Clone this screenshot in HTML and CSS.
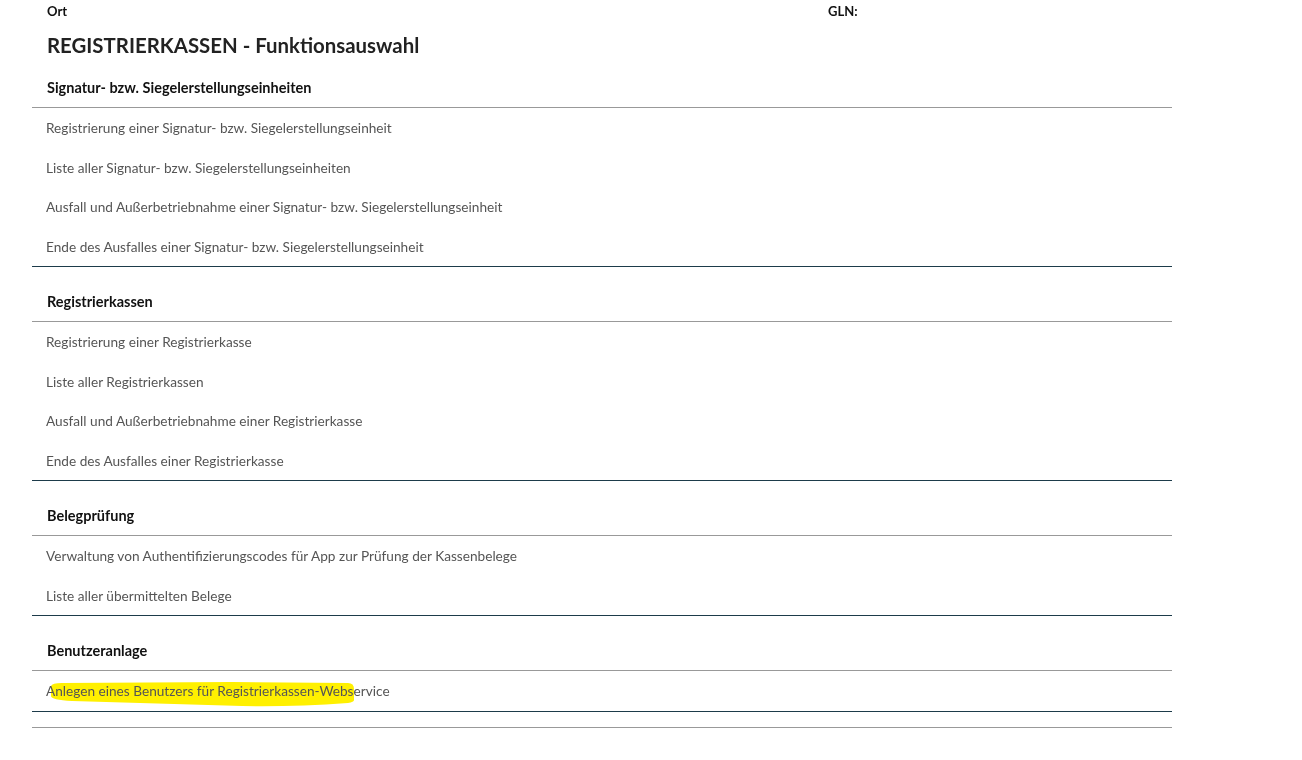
FILE: index.html
```html
<!DOCTYPE html>
<html lang="de">
<head>
    <meta charset="UTF-8">
    <meta name="viewport" content="width=device-width, initial-scale=1.0">
    <title>Registrierkassen - Funktionsauswahl</title>
    <link rel="stylesheet" href="styles.css">
</head>
<body>
    <div class="page">
        <div class="meta">
            <span class="meta-ort">Ort</span>
            <span class="meta-gln">GLN:</span>
        </div>
        <h1>REGISTRIERKASSEN - Funktionsauswahl</h1>

        <section class="group">
            <h2>Signatur- bzw. Siegelerstellungseinheiten</h2>
            <ul class="links">
                <li><a href="#">Registrierung einer Signatur- bzw. Siegelerstellungseinheit</a></li>
                <li><a href="#">Liste aller Signatur- bzw. Siegelerstellungseinheiten</a></li>
                <li><a href="#">Ausfall und Außerbetriebnahme einer Signatur- bzw. Siegelerstellungseinheit</a></li>
                <li><a href="#">Ende des Ausfalles einer Signatur- bzw. Siegelerstellungseinheit</a></li>
            </ul>
        </section>

        <section class="group">
            <h2>Registrierkassen</h2>
            <ul class="links">
                <li><a href="#">Registrierung einer Registrierkasse</a></li>
                <li><a href="#">Liste aller Registrierkassen</a></li>
                <li><a href="#">Ausfall und Außerbetriebnahme einer Registrierkasse</a></li>
                <li><a href="#">Ende des Ausfalles einer Registrierkasse</a></li>
            </ul>
        </section>

        <section class="group">
            <h2>Belegprüfung</h2>
            <ul class="links">
                <li><a href="#">Verwaltung von Authentifizierungscodes für App zur Prüfung der Kassenbelege</a></li>
                <li><a href="#">Liste aller übermittelten Belege</a></li>
            </ul>
        </section>

        <section class="group">
            <h2>Benutzeranlage</h2>
            <ul class="links">
                <li class="marked">
                    <!-- Textmarker-Strich -->
                    <svg class="marker" width="340" height="40" viewBox="0 0 340 40">
                        <path d="M19 15 Q20 12 30 12 L200 11 L316 12 Q322 12 322 18 L322 29 Q322 31 316 32 Q260 36 210 35 L40 30 Q19 29 19 25 Z" fill="#fff000"/>
                    </svg>
                    <a href="#">Anlegen eines Benutzers für Registrierkassen-Webservice</a>
                </li>
            </ul>
        </section>

        <div class="end-rule"></div>
    </div>
</body>
</html>
```

FILE: styles.css
```css
body {
    margin: 0;
    background-color: #fff;
    font-family: Lato, "Open Sans", sans-serif;
}
.page {
    width: 1140px;
    margin-left: 32px;
}
.meta {
    display: flex;
    height: 22px;
    line-height: 22px;
    font-size: 13px;
    font-weight: bold;
    color: #111;
}
.meta-ort {
    margin-left: 15px;
    width: 781px;
}
h1 {
    margin: 9px 0 0 15px;
    height: 28px;
    line-height: 28px;
    font-size: 20.4px;
    font-weight: bold;
    color: #222;
}
.group + .group {
    margin-top: 6px;
}
h2 {
    margin: 0;
    padding: 19px 15px 9px;
    line-height: 20px;
    font-size: 14.5px;
    font-weight: bold;
    color: #111;
    border-bottom: 1px solid #999;
}
.links {
    list-style: none;
    margin: 0;
    padding: 0;
    border-bottom: 1px solid #1d3b4a;
}
.links li {
    position: relative;
    height: 38.5px;
    padding: 1px 0 0 14px;
    line-height: 38.5px;
    font-size: 13.65px;
}
.links a {
    position: relative;
    color: #555;
    text-decoration: none;
}
.marker {
    position: absolute;
    left: 0;
    top: 0;
    pointer-events: none;
    mix-blend-mode: multiply;
}
.end-rule {
    margin-top: 15px;
    border-top: 1px solid #999;
}
```
